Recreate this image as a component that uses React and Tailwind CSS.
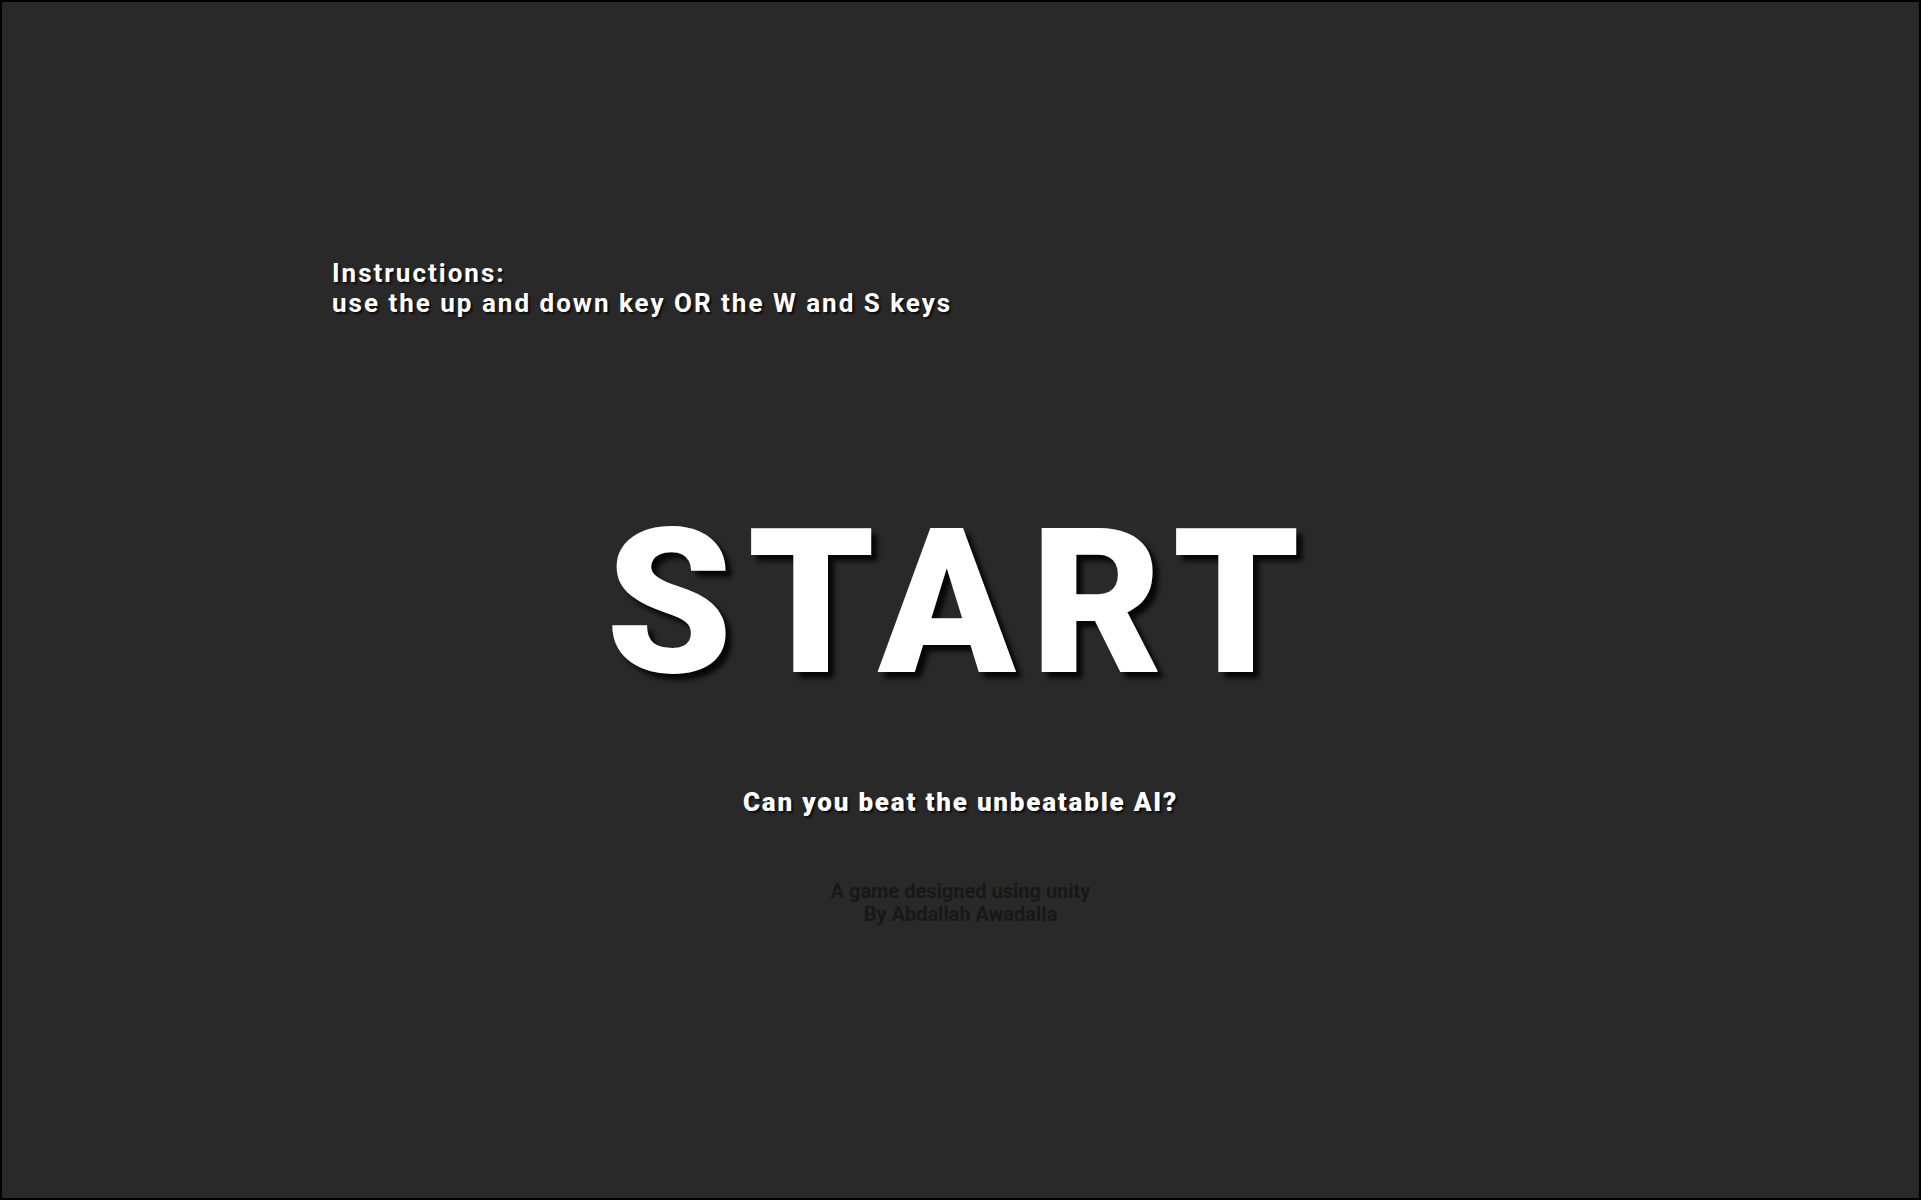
import React from 'react';

const font = { fontFamily: 'Roboto, "Noto Sans", sans-serif' };

const App = () => {
  return (
    <div className="w-[1930px] h-[1200px] bg-white" style={font}>
      <div className="relative w-[1921px] h-[1200px] bg-[#292929] border-2 border-black flex flex-col">
        <div className="pl-[330px] pt-[256px] text-[26px] leading-[30px] font-bold tracking-[2px] text-white [text-shadow:2px_2px_2px_rgba(0,0,0,0.7)]">
          <div>Instructions:</div>
          <div>use the up and down key OR the W and S keys</div>
        </div>
        <div className="mt-[185px] flex justify-center">
          <h1 className="text-[202px] leading-[200px] font-black tracking-[15px] text-white [text-shadow:6px_6px_5px_rgba(0,0,0,0.85)]">
            START
          </h1>
        </div>
        <div className="mt-[84px] flex justify-center text-[26px] leading-[30px] font-black tracking-[1.8px] text-white [text-shadow:2px_2px_2px_rgba(0,0,0,0.7)]">
          Can you beat the unbeatable AI?
        </div>
        <div className="mt-[63px] flex flex-col items-center text-[20px] leading-[23px] font-bold text-[#181818]">
          <div>A game designed using unity</div>
          <div>By Abdallah Awadalla</div>
        </div>
      </div>
    </div>
  );
};

export default App;
